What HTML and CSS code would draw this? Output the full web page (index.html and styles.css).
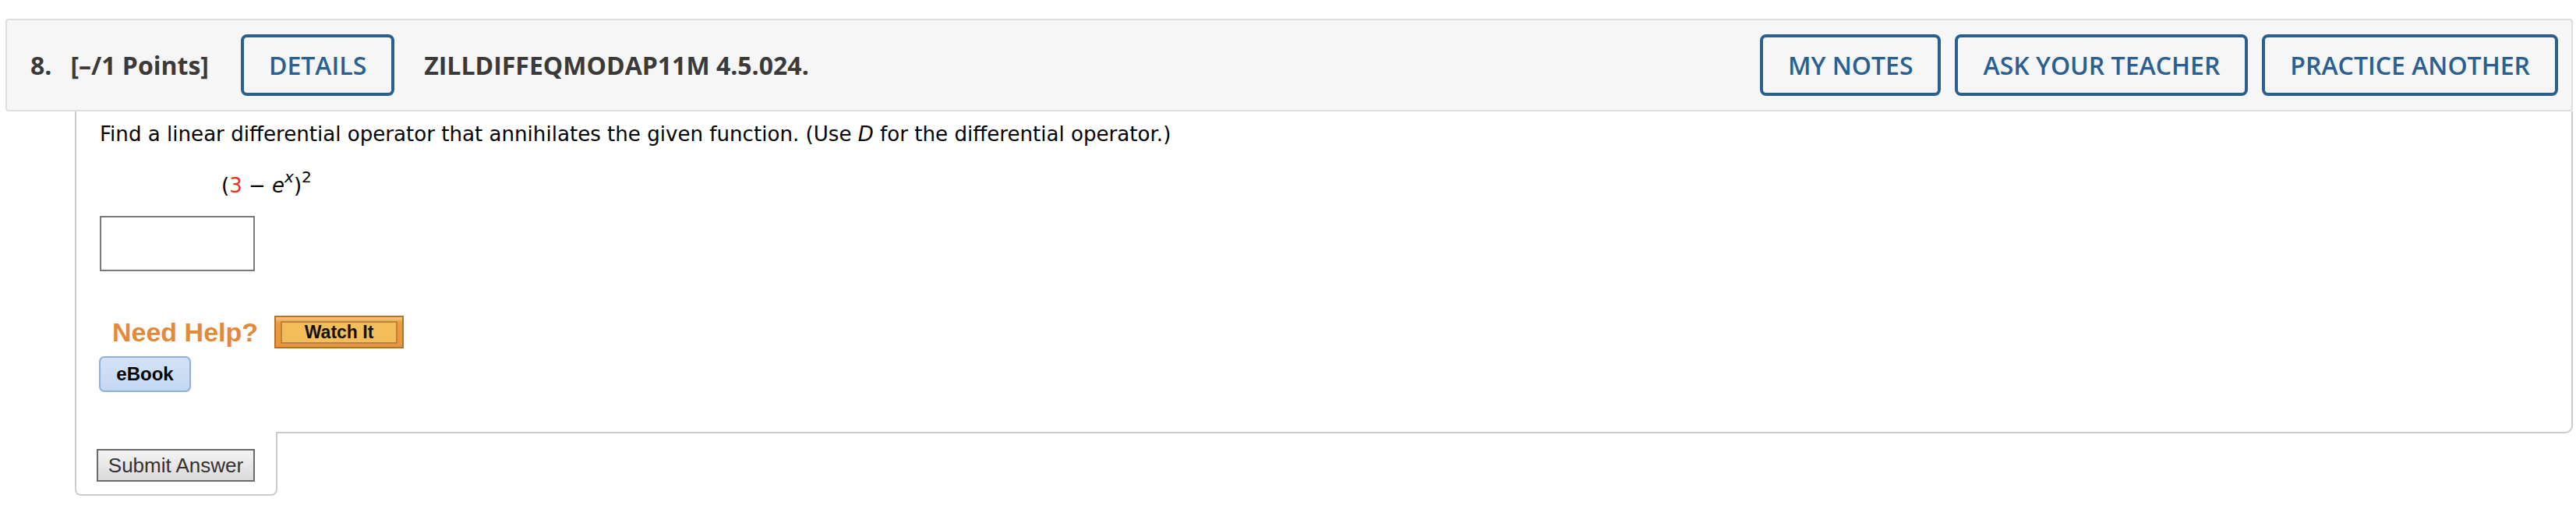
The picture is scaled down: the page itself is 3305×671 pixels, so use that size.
FILE: index.html
```html
<!DOCTYPE html>
<html>
<head>
<meta charset="utf-8">
<link rel="stylesheet" href="styles.css">
</head>
<body>
<div class="question">
  <div class="qhead">
    <span class="qnum">8.</span>
    <span class="qpts">[–/1 Points]</span>
    <button class="hbtn">DETAILS</button>
    <span class="qid">ZILLDIFFEQMODAP11M 4.5.024.</span>
    <div class="hactions">
      <button class="hbtn">MY NOTES</button>
      <button class="hbtn">ASK YOUR TEACHER</button>
      <button class="hbtn">PRACTICE ANOTHER</button>
    </div>
  </div>
  <div class="qbody">
    <p class="prompt">Find a linear differential operator that annihilates the given function. (Use <i>D</i> for the differential operator.)</p>
    <div class="expr">(<span class="red">3</span> − <i>e</i><sup><i>x</i></sup>)<sup>2</sup></div>
    <input class="answer" type="text">
    <div class="help">
      <span class="needhelp">Need Help?</span>
      <span class="watch"><span class="watch-inner">Watch It</span></span>
    </div>
    <span class="ebook">eBook</span>
  </div>
  <div class="submit-tab"><button class="submit">Submit Answer</button></div>
</div>
</body>
</html>
```
FILE: styles.css
```css
html, body {
  margin: 0;
  padding: 0;
  background: #ffffff;
}

.question {
  margin: 24px 4px 0 7px;
}

.qhead {
  display: flex;
  align-items: center;
  background: #f6f6f6;
  border: 2px solid #dedede;
  border-radius: 4px;
  padding: 18px 17px 18px 30px;
  font-family: "Open Sans", sans-serif;
  color: #3a3a3a;
}

.qnum {
  font-weight: 700;
  font-size: 32px;
  margin-right: 24px;
}

.qpts {
  font-weight: 700;
  font-size: 32px;
  margin-right: 41px;
}

.qid {
  font-weight: 700;
  font-size: 32px;
  margin-left: 38px;
}

.hbtn {
  box-sizing: border-box;
  height: 79px;
  padding: 0 32px;
  border: 4px solid #2a6091;
  border-radius: 8px;
  background: transparent;
  color: #2a6091;
  font-family: "Open Sans", sans-serif;
  font-weight: 600;
  font-size: 32px;
}

.hactions {
  margin-left: auto;
  display: flex;
  gap: 18px;
}

.qbody {
  margin-left: 89px;
  border: 2px solid #cccccc;
  border-top: none;
  border-bottom-right-radius: 10px;
  padding: 13px 0 51px 30px;
  font-family: "DejaVu Sans", Verdana, sans-serif;
  color: #000;
}

.prompt {
  margin: 0;
  font-size: 26.1px;
  line-height: 32px;
}

.expr {
  margin-top: 34px;
  padding-left: 156px;
  font-size: 26px;
  line-height: 32px;
}

.expr sup {
  font-size: 20px;
  line-height: 0;
  vertical-align: 13px;
}

.red {
  color: #e8321e;
}

.answer {
  display: block;
  box-sizing: border-box;
  width: 199px;
  height: 71px;
  margin: 23px 0 0 0;
  border: 2px solid #7a7a7a;
  background: #fff;
  padding: 0;
}

.help {
  display: flex;
  align-items: center;
  margin-top: 57px;
  height: 42px;
}

.needhelp {
  font-family: "Liberation Sans", Arial, sans-serif;
  font-weight: 700;
  font-size: 34px;
  line-height: 34px;
  color: #e38a38;
  margin-left: 16px;
  margin-right: 21px;
}

.watch {
  box-sizing: border-box;
  display: flex;
  width: 166px;
  height: 42px;
  padding: 5px 6px 4px 6px;
  border: 2px solid #b5702c;
  background: linear-gradient(#f7c98a 0, #ec9c3e 18%, #ea9538 100%);
}

.watch-inner {
  flex: 1;
  display: flex;
  align-items: center;
  justify-content: center;
  border: 2px solid #b8843e;
  background: #f3bd59;
  font-family: "Liberation Sans", Arial, sans-serif;
  font-weight: 700;
  font-size: 23px;
  color: #111;
}

.ebook {
  box-sizing: border-box;
  display: flex;
  align-items: center;
  justify-content: center;
  width: 118px;
  height: 46px;
  margin-top: 10px;
  margin-left: -1px;
  border: 2px solid #8fb0dc;
  border-radius: 7px;
  background: linear-gradient(#d3e3f6, #c3d8f1);
  font-family: "Liberation Sans", Arial, sans-serif;
  font-weight: 700;
  font-size: 24px;
  color: #000;
}

.submit-tab {
  box-sizing: border-box;
  width: 260px;
  margin-left: 89px;
  margin-top: -2px;
  background: #fff;
  border: 2px solid #cccccc;
  border-top: none;
  border-radius: 0 0 8px 8px;
  padding: 22px 0 16px 26px;
}

.submit {
  display: block;
  box-sizing: border-box;
  width: 203px;
  height: 42px;
  padding: 0;
  border: 2px solid #6b6b6b;
  background: linear-gradient(#f4f4f4, #dadada);
  font-family: "Liberation Sans", Arial, sans-serif;
  font-size: 26px;
  color: #333;
}
```
